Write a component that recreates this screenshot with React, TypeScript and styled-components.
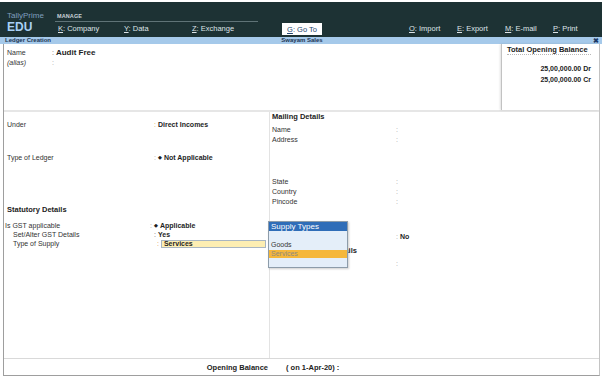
import React from 'react';
import styled, { createGlobalStyle } from 'styled-components';

interface NavItem {
    key: string;
    label: string;
    width: number;
    offset?: number;
}

const leftMenu: NavItem[] = [
    { key: 'K', label: 'Company', width: 66 },
    { key: 'Y', label: 'Data', width: 68 },
    { key: 'Z', label: 'Exchange', width: 90 },
];

const rightMenu: NavItem[] = [
    { key: 'O', label: 'Import', width: 48, offset: 87 },
    { key: 'E', label: 'Export', width: 48 },
    { key: 'M', label: 'E-mail', width: 48 },
    { key: 'P', label: 'Print', width: 40 },
];

const GlobalStyle = createGlobalStyle`
    html, body {
        margin: 0;
        padding: 0;
        background: #fff;
    }
    body {
        font-family: "Liberation Sans", Arial, sans-serif;
        color: #222;
    }
`;

const Screen = styled.div`
    width: 602px;
    height: 379px;
    overflow: hidden;
    position: relative;
    background: #fff;
`;

const TopBar = styled.header`
    margin-top: 2px;
    height: 35px;
    background: #1d3234;
    display: flex;
`;

const Brand = styled.div`
    width: 50px;
    padding: 9px 0 0 7px;
    display: flex;
    flex-direction: column;
`;

const BrandName = styled.span`
    font-size: 8px;
    line-height: 9px;
    color: #7f9fbf;
`;

const BrandEdition = styled.span`
    margin-top: 1px;
    font-size: 12px;
    line-height: 12px;
    font-weight: bold;
    color: #a9d0f5;
`;

const Menu = styled.nav`
    display: flex;
    flex-direction: column;
`;

const ManageRow = styled.div`
    margin-left: -2px;
    padding: 11px 0 0 2px;
    width: 201px;
    height: 8px;
    border-bottom: 1px solid #5f7377;
    font-size: 5.5px;
    line-height: 6px;
    font-weight: bold;
    color: #c9d2d8;
    letter-spacing: 0.1px;
`;

const NavRow = styled.div`
    display: flex;
    align-items: center;
    height: 13px;
    padding-left: 1px;
`;

const NavLink = styled.span<{ $w: number; $offset?: number }>`
    width: ${(p) => p.$w}px;
    margin-left: ${(p) => p.$offset || 0}px;
    font-size: 7.5px;
    color: #dde4e8;
    white-space: nowrap;

    u {
        text-underline-offset: 1px;
    }
`;

const GoToButton = styled.span`
    width: 40px;
    height: 12px;
    margin-top: 1px;
    background: #fff;
    color: #23466f;
    font-size: 7.5px;
    display: flex;
    align-items: center;
    justify-content: center;
`;

const TitleBar = styled.div`
    height: 7px;
    background: #a5c9ea;
    display: grid;
    grid-template-columns: 1fr auto 1fr;
    padding: 0 3px 0 5px;
    font-size: 6px;
    line-height: 7px;
    font-weight: bold;
    color: #1c3553;
`;

const CloseMark = styled.span`
    justify-self: end;
    font-size: 7px;
    color: #1d3a66;
`;

const Body = styled.main`
    margin-left: 3px;
    width: 597px;
    height: 332px;
    box-sizing: border-box;
    border-left: 1px solid #9e9e9e;
    border-right: 1px solid #c4c4c4;
    border-bottom: 1px solid #9e9e9e;
    display: flex;
    flex-direction: column;
`;

const TopSection = styled.section`
    height: 68px;
    box-sizing: border-box;
    border-bottom: 2px solid #e6e6e6;
    display: flex;
`;

const NameArea = styled.div`
    flex: 1;
    padding: 2px 0 0 3px;
`;

const Line = styled.div<{ $gap?: number; $indent?: number; $h?: number }>`
    display: flex;
    align-items: center;
    height: ${(p) => p.$h || 9}px;
    margin-top: ${(p) => p.$gap || 0}px;
    padding-left: ${(p) => p.$indent || 0}px;
    font-size: 7px;
    white-space: nowrap;
`;

const Label = styled.span<{ $w: number; $italic?: boolean }>`
    width: ${(p) => p.$w}px;
    flex-shrink: 0;
    color: #333;
    font-style: ${(p) => (p.$italic ? 'italic' : 'normal')};
`;

const Colon = styled.span<{ $tone?: string }>`
    color: ${(p) => p.$tone || '#a0a0a0'};
    margin-right: 2px;
`;

const Value = styled.span`
    font-weight: bold;
    color: #1e1e1e;
`;

const NameValue = styled(Value)`
    font-size: 8px;
`;

const Diamond = styled.span`
    font-size: 5px;
    margin-right: 2px;
    position: relative;
    top: -1px;
`;

const BalanceBox = styled.aside`
    width: 98px;
    box-sizing: border-box;
    border-left: 1px solid #c2c2c2;
    box-shadow: -1px 0 2px rgba(0, 0, 0, 0.12);
    padding: 1px 8px 0 5px;
    display: flex;
    flex-direction: column;
`;

const BalanceTitle = styled.div`
    font-size: 7.5px;
    line-height: 9px;
    font-weight: bold;
    color: #222;
    border-bottom: 1px dotted #b8b8b8;
    white-space: nowrap;
`;

const Amount = styled.div<{ $gap?: number }>`
    margin-top: ${(p) => p.$gap || 0}px;
    text-align: right;
    font-size: 7px;
    line-height: 11px;
    font-weight: bold;
    color: #222;
`;

const MiddleSection = styled.section`
    height: 246px;
    display: grid;
    grid-template-columns: 266px 1fr;
`;

const LeftColumn = styled.div`
    border-right: 1px solid #e3e3e3;
    padding: 8px 0 0 3px;
`;

const RightColumn = styled.div`
    padding-left: 2px;
`;

const Heading = styled.div<{ $gap?: number }>`
    margin-top: ${(p) => p.$gap || 0}px;
    font-size: 7.5px;
    line-height: 10px;
    height: 10px;
    font-weight: bold;
    color: #222;
    white-space: nowrap;
`;

const InputBox = styled.span`
    width: 105px;
    height: 8px;
    box-sizing: border-box;
    padding-left: 2px;
    background: #fdeeb2;
    border: 1px solid #a9b6c2;
    font-weight: bold;
    font-size: 7px;
    line-height: 6px;
    color: #1e1e1e;
`;

const BottomSection = styled.footer`
    flex: 1;
    border-top: 1px solid #d9d9d9;
    display: grid;
    grid-template-columns: 264px 1fr;
    align-items: center;
    font-size: 7.5px;
    font-weight: bold;
    color: #222;
`;

const BottomLabel = styled.span<{ $right?: boolean }>`
    text-align: ${(p) => (p.$right ? 'right' : 'left')};
    padding-left: ${(p) => (p.$right ? 0 : 18)}px;
`;

const Popup = styled.div`
    position: absolute;
    left: 268px;
    top: 221px;
    width: 80px;
    height: 47px;
    box-sizing: border-box;
    border: 1px solid #8d9caa;
    background: #e4eef9;
    box-shadow: 1px 1px 2px rgba(0, 0, 0, 0.2);
`;

const PopupHeader = styled.div`
    height: 9px;
    background: #2f6db8;
    color: #fff;
    font-size: 8px;
    line-height: 9px;
    padding-left: 2px;
`;

const PopupItem = styled.div<{ $active?: boolean; $gap?: number }>`
    margin-top: ${(p) => p.$gap || 0}px;
    height: ${(p) => (p.$active ? 8 : 9)}px;
    line-height: ${(p) => (p.$active ? 8 : 9)}px;
    padding-left: 2px;
    font-size: 7px;
    background: ${(p) => (p.$active ? '#f5b73a' : 'transparent')};
    color: ${(p) => (p.$active ? '#8f8a80' : '#333')};
`;

const renderNav = (item: NavItem) => (
    <NavLink key={item.key} $w={item.width} $offset={item.offset}>
        <u>{item.key}</u>: {item.label}
    </NavLink>
);

const App: React.FC = () => {
    return (
        <Screen>
            <GlobalStyle />
            <TopBar>
                <Brand>
                    <BrandName>TallyPrime</BrandName>
                    <BrandEdition>EDU</BrandEdition>
                </Brand>
                <Menu>
                    <ManageRow>MANAGE</ManageRow>
                    <NavRow>
                        {leftMenu.map(renderNav)}
                        <GoToButton>
                            <u>G</u>: Go To
                        </GoToButton>
                        {rightMenu.map(renderNav)}
                    </NavRow>
                </Menu>
            </TopBar>
            <TitleBar>
                <span>Ledger Creation</span>
                <span>Swayam Sales</span>
                <CloseMark>✖</CloseMark>
            </TitleBar>
            <Body>
                <TopSection>
                    <NameArea>
                        <Line $h={10} $gap={1}>
                            <Label $w={45}>Name</Label>
                            <Colon $tone="#666">:</Colon>
                            <NameValue>Audit Free</NameValue>
                        </Line>
                        <Line $h={10}>
                            <Label $w={45} $italic>(alias)</Label>
                            <Colon>:</Colon>
                        </Line>
                    </NameArea>
                    <BalanceBox>
                        <BalanceTitle>Total Opening Balance</BalanceTitle>
                        <Amount $gap={8}>25,00,000.00 Dr</Amount>
                        <Amount>25,00,000.00 Cr</Amount>
                    </BalanceBox>
                </TopSection>
                <MiddleSection>
                    <LeftColumn>
                        <Line>
                            <Label $w={147}>Under</Label>
                            <Colon $tone="#e0ad2a">:</Colon>
                            <Value>Direct Incomes</Value>
                        </Line>
                        <Line $gap={24}>
                            <Label $w={147}>Type of Ledger</Label>
                            <Colon>:</Colon>
                            <Value><Diamond>◆</Diamond>Not Applicable</Value>
                        </Line>
                        <Heading $gap={43}>Statutory Details</Heading>
                        <Line $gap={6} $indent={0}>
                            <Label $w={145} style={{ marginLeft: -2 }}>Is GST applicable</Label>
                            <Colon>:</Colon>
                            <Value><Diamond>◆</Diamond>Applicable</Value>
                        </Line>
                        <Line $indent={6}>
                            <Label $w={141}>Set/Alter GST Details</Label>
                            <Colon $tone="#666">:</Colon>
                            <Value>Yes</Value>
                        </Line>
                        <Line $indent={6}>
                            <Label $w={144}>Type of Supply</Label>
                            <Colon $tone="#e09a3a">:</Colon>
                            <InputBox>Services</InputBox>
                        </Line>
                    </LeftColumn>
                    <RightColumn>
                        <Heading>Mailing Details</Heading>
                        <Line $h={10} $gap={2}>
                            <Label $w={124}>Name</Label>
                            <Colon>:</Colon>
                        </Line>
                        <Line $h={10}>
                            <Label $w={124}>Address</Label>
                            <Colon>:</Colon>
                        </Line>
                        <Line $h={10} $gap={32}>
                            <Label $w={124}>State</Label>
                            <Colon>:</Colon>
                        </Line>
                        <Line $h={10}>
                            <Label $w={124}>Country</Label>
                            <Colon>:</Colon>
                        </Line>
                        <Line $h={10}>
                            <Label $w={124}>Pincode</Label>
                            <Colon>:</Colon>
                        </Line>
                        <Line $h={10} $gap={25}>
                            <Label $w={124} />
                            <Colon>:</Colon>
                            <Value>No</Value>
                        </Line>
                        <Heading $gap={5}>Tax Registration Details</Heading>
                        <Line $h={10} $gap={2}>
                            <Label $w={124} />
                            <Colon>:</Colon>
                        </Line>
                    </RightColumn>
                </MiddleSection>
                <BottomSection>
                    <BottomLabel $right>Opening Balance</BottomLabel>
                    <BottomLabel>( on 1-Apr-20) :</BottomLabel>
                </BottomSection>
            </Body>
            <Popup>
                <PopupHeader>Supply Types</PopupHeader>
                <PopupItem $gap={9}>Goods</PopupItem>
                <PopupItem $active $gap={1}>Services</PopupItem>
            </Popup>
        </Screen>
    );
};

export default App;
